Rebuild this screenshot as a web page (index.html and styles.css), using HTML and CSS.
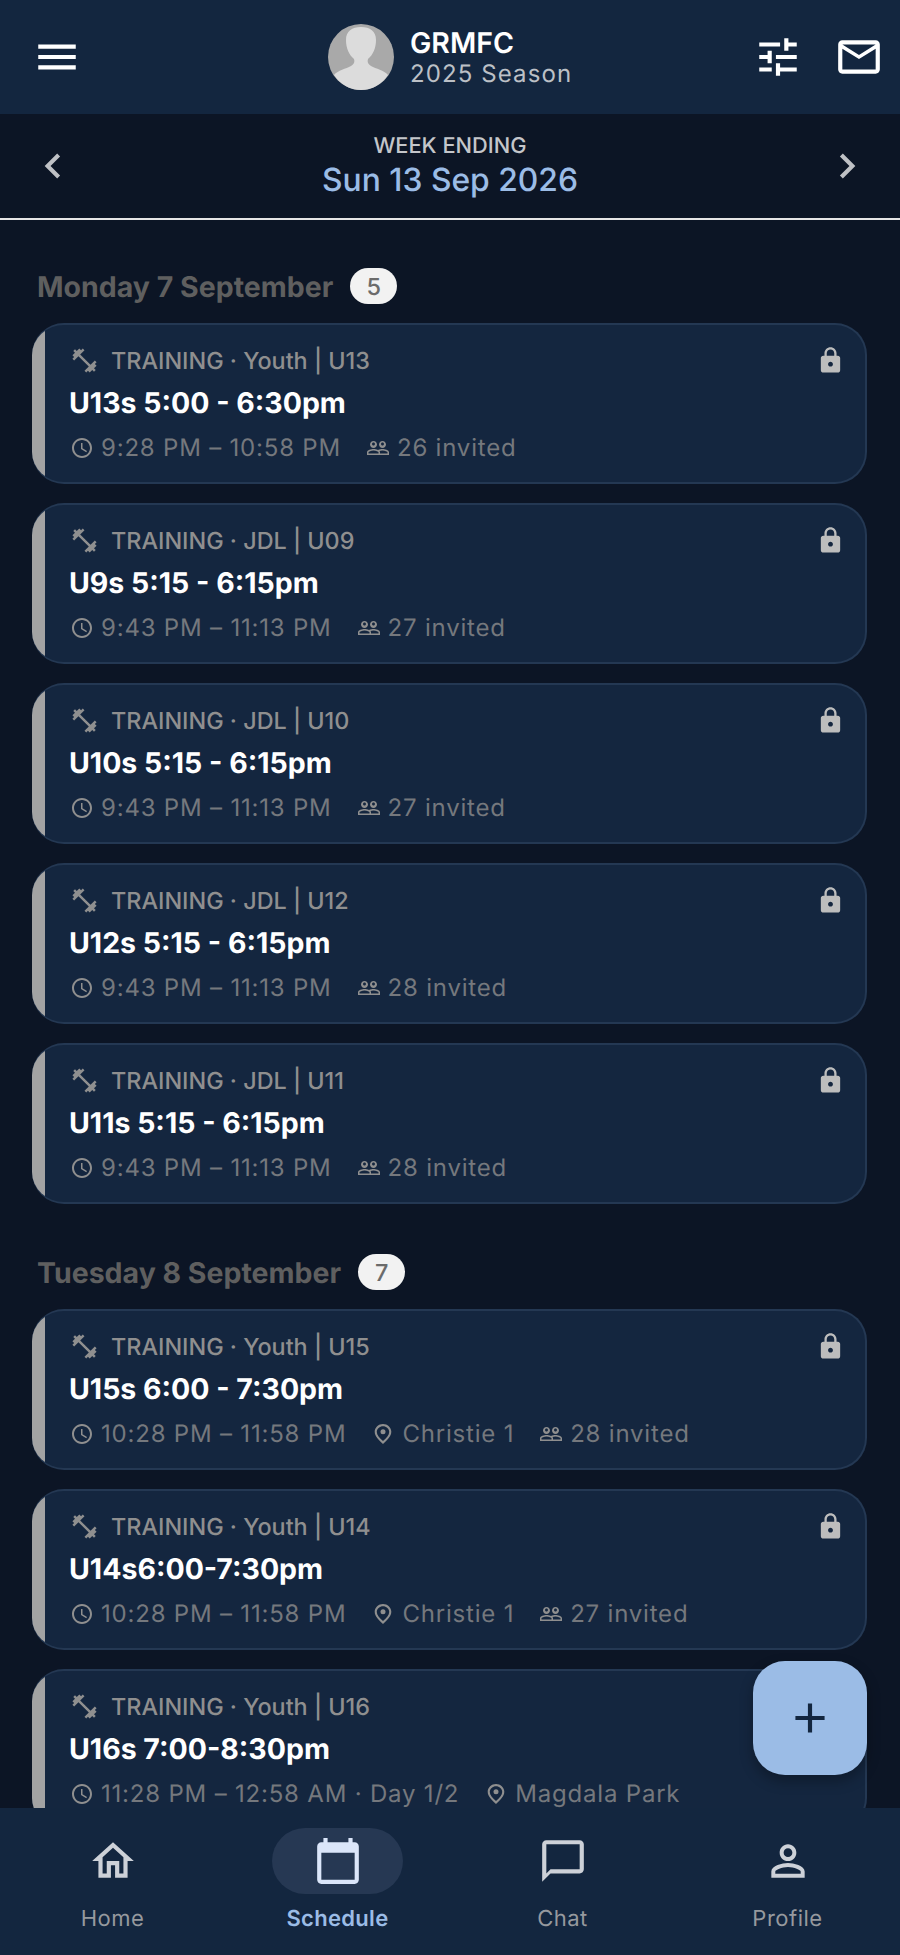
FILE: index.html
```html
<!DOCTYPE html>
<html lang="en">
<head>
    <meta charset="UTF-8">
    <meta name="viewport" content="width=device-width, initial-scale=1.0">
    <title>Schedule</title>
    <link rel="stylesheet" href="styles.css">
</head>
<body>
    <svg class="sprite" xmlns="http://www.w3.org/2000/svg">
        <symbol id="i-gym" viewBox="0 0 24 24"><path d="M20.57 14.86L22 13.43 20.57 12 17 15.57 8.43 7 12 3.43 10.57 2 9.14 3.43 7.71 2 5.57 4.14 4.14 2.71 2.71 4.14l1.43 1.43L2 7.71l1.43 1.43L2 10.57 3.43 12 7 8.43 15.57 17 12 20.57 13.43 22l1.43-1.43L16.29 22l2.14-2.14 1.43 1.43 1.43-1.43-1.43-1.43L22 16.29z"/></symbol>
        <symbol id="i-lock" viewBox="0 0 24 24"><path d="M18 8h-1V6c0-2.76-2.24-5-5-5S7 3.24 7 6v2H6c-1.1 0-2 .9-2 2v10c0 1.1.9 2 2 2h12c1.1 0 2-.9 2-2V10c0-1.1-.9-2-2-2zm-6 9c-1.1 0-2-.9-2-2s.9-2 2-2 2 .9 2 2-.9 2-2 2zm3.1-9H8.9V6c0-1.71 1.39-3.1 3.1-3.1 1.71 0 3.1 1.39 3.1 3.1v2z"/></symbol>
        <symbol id="i-clock" viewBox="0 0 24 24"><path d="M11.99 2C6.47 2 2 6.48 2 12s4.47 10 9.99 10C17.52 22 22 17.52 22 12S17.52 2 11.99 2zM12 20c-4.42 0-8-3.58-8-8s3.58-8 8-8 8 3.58 8 8-3.58 8-8 8zm.5-13H11v6l5.25 3.15.75-1.23-4.5-2.67z"/></symbol>
        <symbol id="i-people" viewBox="0 0 24 24"><path d="M16.5 13c-1.2 0-3.07.34-4.5 1-1.43-.67-3.3-1-4.5-1C5.33 13 1 14.08 1 16.25V19h22v-2.75c0-2.17-4.33-3.25-6.5-3.25zm-4 4.5h-10v-1.25c0-.54 2.56-1.75 5-1.75s5 1.21 5 1.75v1.25zm9 0H14v-1.25c0-.46-.2-.86-.52-1.22.88-.3 1.96-.53 3.02-.53 2.44 0 5 1.21 5 1.75v1.25zM7.5 12c1.93 0 3.5-1.57 3.5-3.5S9.43 5 7.5 5 4 6.57 4 8.5 5.57 12 7.5 12zm0-5.5c.83 0 1.5.67 1.5 1.5s-.67 1.5-1.5 1.5S6 8.83 6 8 6.67 6.5 7.5 6.5zm9 5.5c1.93 0 3.5-1.57 3.5-3.5S18.43 5 16.5 5 13 6.57 13 8.5s1.57 3.5 3.5 3.5zm0-5.5c.83 0 1.5.67 1.5 1.5s-.67 1.5-1.5 1.5S15 8.83 15 8s.67-1.5 1.5-1.5z"/></symbol>
        <symbol id="i-place" viewBox="0 0 24 24"><path fill-rule="evenodd" d="M12 2C7.6 2 3.7 5.4 3.7 9.8c0 4.4 4 8.4 8.3 12.2 4.3-3.8 8.3-7.8 8.3-12.2C20.3 5.4 16.4 2 12 2zm0 2.2c-3.3 0-6.2 2.5-6.2 5.7 0 2.9 2.7 6 6.2 9.2 3.5-3.2 6.2-6.3 6.2-9.2 0-3.2-2.9-5.7-6.2-5.7z"/><circle cx="12" cy="9.7" r="2.5"/></symbol>
    </svg>

    <div class="app">
        <header class="topbar">
            <svg class="icon-lg" viewBox="0 0 24 24"><path d="M3 18h18v-2H3v2zm0-5h18v-2H3v2zm0-7v2h18V6H3z"/></svg>
            <div class="club">
                <svg class="avatar" viewBox="0 0 66 66">
                    <circle cx="33" cy="33" r="33" fill="#a9a9a9"/>
                    <path d="M33 3c-9 0-15 4-15 13 0 8 3 15 8 19 1 3 0 5-3 7-5 3-13 4-17 9 6 9 16 15 27 15s21-6 27-15c-4-5-12-6-17-9-3-2-4-4-3-7 5-4 8-11 8-19 0-9-6-13-15-13z" fill="#dcdcdc"/>
                </svg>
                <div>
                    <div class="club-name">GRMFC</div>
                    <div class="club-season">2025 Season</div>
                </div>
            </div>
            <div class="topbar-actions">
                <svg class="icon-lg" viewBox="0 0 24 24"><path d="M3 17v2h6v-2H3zM3 5v2h10V5H3zm10 16v-2h8v-2h-8v-2h-2v6h2zM7 9v2H3v2h4v2h2V9H7zm14 4v-2H11v2h10zm-6-4h2V7h4V5h-4V3h-2v6z"/></svg>
                <svg class="icon-lg" viewBox="0 0 24 24"><path d="M20 4H4c-1.1 0-1.99.9-1.99 2L2 18c0 1.1.9 2 2 2h16c1.1 0 2-.9 2-2V6c0-1.1-.9-2-2-2zm0 14H4V8l8 5 8-5v10zm-8-7L4 6h16l-8 5z"/></svg>
            </div>
        </header>

        <div class="weekbar">
            <svg class="chevron" viewBox="0 0 24 24"><path d="M15.41 7.41L14 6l-6 6 6 6 1.41-1.41L10.83 12z"/></svg>
            <div class="week-text">
                <div class="week-label">WEEK ENDING</div>
                <div class="week-date">Sun 13 Sep 2026</div>
            </div>
            <svg class="chevron" viewBox="0 0 24 24"><path d="M10 6L8.59 7.41 13.17 12l-4.58 4.59L10 18l6-6z"/></svg>
        </div>

        <main class="schedule">
            <div class="day-head">
                <h2>Monday 7 September</h2>
                <span class="count">5</span>
            </div>

            <article class="card">
                <div class="card-bar"></div>
                <div class="card-body">
                    <div class="card-type"><svg class="icon-gym"><use href="#i-gym"/></svg>TRAINING · Youth | U13<svg class="icon-lock"><use href="#i-lock"/></svg></div>
                    <div class="card-title">U13s 5:00 - 6:30pm</div>
                    <div class="card-meta">
                        <span><svg class="icon-sm"><use href="#i-clock"/></svg>9:28 PM – 10:58 PM</span>
                        <span><svg class="icon-sm"><use href="#i-people"/></svg>26 invited</span>
                    </div>
                </div>
            </article>

            <article class="card">
                <div class="card-bar"></div>
                <div class="card-body">
                    <div class="card-type"><svg class="icon-gym"><use href="#i-gym"/></svg>TRAINING · JDL | U09<svg class="icon-lock"><use href="#i-lock"/></svg></div>
                    <div class="card-title">U9s 5:15 - 6:15pm</div>
                    <div class="card-meta">
                        <span><svg class="icon-sm"><use href="#i-clock"/></svg>9:43 PM – 11:13 PM</span>
                        <span><svg class="icon-sm"><use href="#i-people"/></svg>27 invited</span>
                    </div>
                </div>
            </article>

            <article class="card">
                <div class="card-bar"></div>
                <div class="card-body">
                    <div class="card-type"><svg class="icon-gym"><use href="#i-gym"/></svg>TRAINING · JDL | U10<svg class="icon-lock"><use href="#i-lock"/></svg></div>
                    <div class="card-title">U10s 5:15 - 6:15pm</div>
                    <div class="card-meta">
                        <span><svg class="icon-sm"><use href="#i-clock"/></svg>9:43 PM – 11:13 PM</span>
                        <span><svg class="icon-sm"><use href="#i-people"/></svg>27 invited</span>
                    </div>
                </div>
            </article>

            <article class="card">
                <div class="card-bar"></div>
                <div class="card-body">
                    <div class="card-type"><svg class="icon-gym"><use href="#i-gym"/></svg>TRAINING · JDL | U12<svg class="icon-lock"><use href="#i-lock"/></svg></div>
                    <div class="card-title">U12s 5:15 - 6:15pm</div>
                    <div class="card-meta">
                        <span><svg class="icon-sm"><use href="#i-clock"/></svg>9:43 PM – 11:13 PM</span>
                        <span><svg class="icon-sm"><use href="#i-people"/></svg>28 invited</span>
                    </div>
                </div>
            </article>

            <article class="card">
                <div class="card-bar"></div>
                <div class="card-body">
                    <div class="card-type"><svg class="icon-gym"><use href="#i-gym"/></svg>TRAINING · JDL | U11<svg class="icon-lock"><use href="#i-lock"/></svg></div>
                    <div class="card-title">U11s 5:15 - 6:15pm</div>
                    <div class="card-meta">
                        <span><svg class="icon-sm"><use href="#i-clock"/></svg>9:43 PM – 11:13 PM</span>
                        <span><svg class="icon-sm"><use href="#i-people"/></svg>28 invited</span>
                    </div>
                </div>
            </article>

            <div class="day-head">
                <h2>Tuesday 8 September</h2>
                <span class="count">7</span>
            </div>

            <article class="card">
                <div class="card-bar"></div>
                <div class="card-body">
                    <div class="card-type"><svg class="icon-gym"><use href="#i-gym"/></svg>TRAINING · Youth | U15<svg class="icon-lock"><use href="#i-lock"/></svg></div>
                    <div class="card-title">U15s 6:00 - 7:30pm</div>
                    <div class="card-meta">
                        <span><svg class="icon-sm"><use href="#i-clock"/></svg>10:28 PM – 11:58 PM</span>
                        <span><svg class="icon-sm"><use href="#i-place"/></svg>Christie 1</span>
                        <span><svg class="icon-sm"><use href="#i-people"/></svg>28 invited</span>
                    </div>
                </div>
            </article>

            <article class="card">
                <div class="card-bar"></div>
                <div class="card-body">
                    <div class="card-type"><svg class="icon-gym"><use href="#i-gym"/></svg>TRAINING · Youth | U14<svg class="icon-lock"><use href="#i-lock"/></svg></div>
                    <div class="card-title">U14s6:00-7:30pm</div>
                    <div class="card-meta">
                        <span><svg class="icon-sm"><use href="#i-clock"/></svg>10:28 PM – 11:58 PM</span>
                        <span><svg class="icon-sm"><use href="#i-place"/></svg>Christie 1</span>
                        <span><svg class="icon-sm"><use href="#i-people"/></svg>27 invited</span>
                    </div>
                </div>
            </article>

            <article class="card">
                <div class="card-bar"></div>
                <div class="card-body">
                    <div class="card-type"><svg class="icon-gym"><use href="#i-gym"/></svg>TRAINING · Youth | U16</div>
                    <div class="card-title">U16s 7:00-8:30pm</div>
                    <div class="card-meta">
                        <span><svg class="icon-sm"><use href="#i-clock"/></svg>11:28 PM – 12:58 AM · Day 1/2</span>
                        <span><svg class="icon-sm"><use href="#i-place"/></svg>Magdala Park</span>
                    </div>
                </div>
            </article>

            <button class="fab">
                <svg viewBox="0 0 24 24"><path d="M19 13h-6v6h-2v-6H5v-2h6V5h2v6h6v2z"/></svg>
            </button>
        </main>

        <nav class="tabs">
            <div class="tab">
                <div class="tab-icon"><svg viewBox="0 0 24 24"><path d="M12 5.69l5 4.5V18h-2v-6H9v6H7v-7.81l5-4.5M12 3L2 12h3v8h6v-6h2v6h6v-8h3L12 3z"/></svg></div>
                <span>Home</span>
            </div>
            <div class="tab tab-active">
                <div class="tab-icon"><svg viewBox="0 0 24 24"><path d="M20 3h-1V1h-2v2H7V1H5v2H4c-1.1 0-2 .9-2 2v16c0 1.1.9 2 2 2h16c1.1 0 2-.9 2-2V5c0-1.1-.9-2-2-2zm0 18H4V8h16v13z"/></svg></div>
                <span>Schedule</span>
            </div>
            <div class="tab">
                <div class="tab-icon"><svg viewBox="0 0 24 24"><path d="M20 2H4c-1.1 0-2 .9-2 2v18l4-4h14c1.1 0 2-.9 2-2V4c0-1.1-.9-2-2-2zm0 14H6l-2 2V4h16v12z"/></svg></div>
                <span>Chat</span>
            </div>
            <div class="tab">
                <div class="tab-icon"><svg viewBox="0 0 24 24"><path d="M12 5.9c1.16 0 2.1.94 2.1 2.1s-.94 2.1-2.1 2.1S9.9 9.16 9.9 8s.94-2.1 2.1-2.1m0 9c2.97 0 6.1 1.46 6.1 2.1v1.1H5.9V17c0-.64 3.13-2.1 6.1-2.1M12 4C9.79 4 8 5.79 8 8s1.79 4 4 4 4-1.79 4-4-1.79-4-4-4zm0 9c-2.67 0-8 1.34-8 4v3h16v-3c0-2.66-5.33-4-8-4z"/></svg></div>
                <span>Profile</span>
            </div>
        </nav>
    </div>
</body>
</html>
```

FILE: styles.css
```css
* {
    box-sizing: border-box;
}
body {
    font-family: Inter, "Liberation Sans", sans-serif;
    background-color: #0c1525;
    margin: 0;
    text-rendering: geometricPrecision;
}
.sprite {
    display: none;
}
.app {
    height: 1955px;
    display: flex;
    flex-direction: column;
    overflow: hidden;
}

/* top bar */
.topbar {
    height: 114px;
    flex: none;
    background: #13263f;
    display: flex;
    align-items: center;
    justify-content: space-between;
    padding: 0 16px 0 32px;
    position: relative;
}
.icon-lg {
    width: 50px;
    height: 50px;
    fill: #fff;
    display: block;
}
.club {
    position: absolute;
    left: 328px;
    top: 24px;
    display: flex;
    align-items: center;
    gap: 16px;
}
.avatar {
    width: 66px;
    height: 66px;
    display: block;
}
.club-name {
    color: #fff;
    font-size: 28.5px;
    font-weight: 600;
    line-height: 33px;
}
.club-season {
    color: #bcc0c6;
    font-size: 24px;
    letter-spacing: 1.1px;
    line-height: 30px;
}
.topbar-actions {
    display: flex;
    gap: 31px;
}

/* week picker */
.weekbar {
    height: 106px;
    flex: none;
    background: #0c1525;
    border-bottom: 2px solid #e6e6e6;
    display: flex;
    align-items: center;
    justify-content: space-between;
    padding: 0 28px 0 28px;
}
.chevron {
    width: 50px;
    height: 50px;
    fill: #bfc1c5;
    display: block;
}
.week-text {
    text-align: center;
}
.week-label {
    color: #c4c6ca;
    font-size: 21.8px;
    font-weight: 500;
    line-height: 26px;
}
.week-date {
    color: #9bbce6;
    font-size: 31.8px;
    font-weight: 500;
    line-height: 40px;
    margin-top: 1px;
}

/* schedule list */
.schedule {
    flex: 1;
    min-height: 0;
    overflow: hidden;
    position: relative;
    padding: 0 33px 0 32px;
}
.day-head {
    display: flex;
    align-items: center;
    gap: 17px;
    height: 36px;
    margin: 48px 0 19px 5px;
}
.day-head h2 {
    margin: 0;
    color: #5f5f5f;
    font-size: 28.5px;
    font-weight: 700;
}
.count {
    background: #f2f2f2;
    color: #6b6b6b;
    font-size: 23.5px;
    font-weight: 500;
    width: 47px;
    height: 36px;
    border-radius: 18px;
    display: flex;
    align-items: center;
    justify-content: center;
}
.day-head ~ .day-head {
    margin-top: 50px;
}
.card {
    height: 161px;
    margin-bottom: 19px;
    background: #14263f;
    border: 2px solid #243853;
    border-left: 0;
    border-radius: 32px;
    overflow: hidden;
    display: flex;
}
.card-bar {
    width: 13px;
    flex: none;
    background: #a3a3a3;
}
.card-body {
    flex: 1;
    padding: 0 24px 0 25px;
}
.card-type {
    height: 30px;
    margin-top: 20px;
    display: flex;
    align-items: center;
    color: #8f8f8f;
    font-size: 23.4px;
    font-weight: 500;
}
.icon-gym {
    width: 29px;
    height: 29px;
    fill: #8f8f8f;
    margin-right: 12px;
    flex: none;
}
.icon-lock {
    width: 29px;
    height: 29px;
    fill: #bdbdbd;
    margin-left: auto;
    margin-right: -4px;
}
.card-title {
    color: #fff;
    font-size: 28.5px;
    font-weight: 700;
    line-height: 36px;
    margin: 10px 0 0 -1px;
}
.card-meta {
    display: flex;
    gap: 25px;
    margin-top: 11px;
    color: #75787d;
    font-size: 24px;
    letter-spacing: 0.8px;
    line-height: 32px;
}
.card-meta span {
    display: flex;
    align-items: center;
    gap: 7px;
}
.icon-sm {
    width: 24px;
    height: 24px;
    fill: #8f8f8f;
    flex: none;
}
.fab {
    position: absolute;
    right: 33px;
    bottom: 33px;
    width: 114px;
    height: 114px;
    border: none;
    border-radius: 32px;
    background: #9bbce6;
    box-shadow: 0 6px 14px rgba(0, 0, 0, 0.3);
    display: flex;
    align-items: center;
    justify-content: center;
    padding: 0;
}
.fab svg {
    width: 50px;
    height: 50px;
    fill: #13263f;
}

/* bottom tabs */
.tabs {
    height: 147px;
    flex: none;
    background: #13263f;
    display: grid;
    grid-template-columns: repeat(4, 1fr);
}
.tab {
    display: flex;
    flex-direction: column;
    align-items: center;
    padding-top: 20px;
    color: #96999e;
    font-size: 22px;
    letter-spacing: 0.5px;
}
.tab-icon {
    width: 131px;
    height: 66px;
    border-radius: 33px;
    display: flex;
    align-items: center;
    justify-content: center;
    margin-bottom: 12px;
}
.tab-icon svg {
    width: 50px;
    height: 50px;
    fill: #cdd1d8;
}
.tab-active {
    color: #9bbce6;
    font-weight: 600;
    letter-spacing: 0.3px;
}
.tab-active .tab-icon {
    background: #263853;
}
.tab-active .tab-icon svg {
    fill: #dbe6fa;
}
```
